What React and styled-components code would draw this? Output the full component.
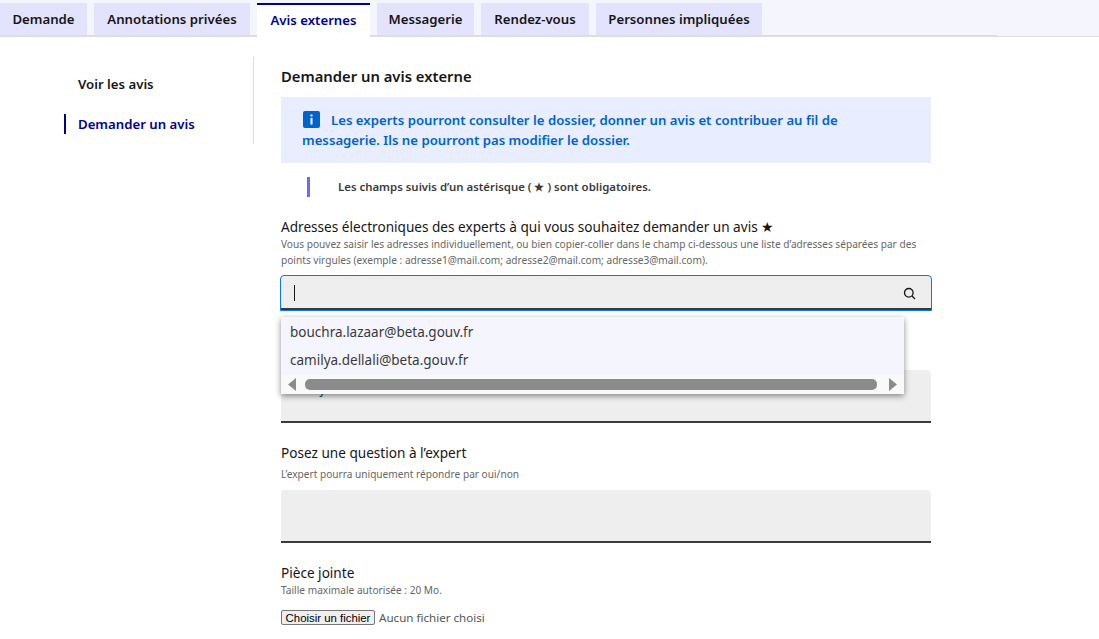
import React from 'react';
import styled, { createGlobalStyle } from 'styled-components';

const Global = createGlobalStyle`
  html, body { margin: 0; padding: 0; background: #fff; overflow: hidden; }
  body { font-family: "Noto Sans", "Liberation Sans", sans-serif; color: #161616; }
  * { box-sizing: border-box; }
`;

const TabBar = styled.div`
  height: 37px;
  padding-top: 3px;
  background: #f5f5fe;
  border-bottom: 1px solid #ddd;
`;

const TabList = styled.div`
  display: flex;
  gap: 7px;
  width: 998px;
  height: 33px;
  border-bottom: 1px solid #ddd;
`;

const Tab = styled.div`
  display: flex;
  align-items: center;
  justify-content: center;
  flex: none;
  width: ${(p) => p.$w}px;
  height: ${(p) => (p.$active ? 34 : 32)}px;
  background: ${(p) => (p.$active ? '#fff' : '#e3e3fd')};
  border-top: ${(p) => (p.$active ? '2px solid #000091' : 'none')};
  color: ${(p) => (p.$active ? '#000091' : '#161616')};
  font-size: 13.2px;
  font-weight: 600;
  padding-bottom: ${(p) => (p.$active ? 2 : 0)}px;
  z-index: 1;
`;

const Main = styled.div`
  display: flex;
  padding-top: 20px;
`;

const Side = styled.nav`
  width: 254px;
  height: 87px;
  padding-left: 64px;
  border-right: 1px solid #ddd;
  display: flex;
  flex-direction: column;
  gap: 20px;
  padding-top: 17px;
`;

const SideItem = styled.div`
  height: 20px;
  line-height: 20px;
  font-size: 13.2px;
  font-weight: 600;
  padding-left: ${(p) => (p.$active ? 12 : 14)}px;
  border-left: ${(p) => (p.$active ? '2px solid #000091' : 'none')};
  color: ${(p) => (p.$active ? '#000091' : '#161616')};
`;

const Content = styled.div`
  width: 650px;
  margin-left: 27px;
  position: relative;
`;

const Title = styled.h2`
  margin: 0;
  height: 40px;
  line-height: 39px;
  font-size: 14.8px;
  font-weight: 600;
`;

const Alert = styled.div`
  background: #e8edff;
  height: 66px;
  padding: 13px 21px;
  color: #0063cb;
  font-size: 13.2px;
  font-weight: 600;
  line-height: 20px;
`;

const InfoIcon = styled.svg`
  width: 17px;
  height: 17px;
  vertical-align: -3px;
  margin-right: 11px;
  margin-left: 1px;
`;

const Notice = styled.div`
  margin: 14px 0 0 26px;
  height: 20px;
  line-height: 20px;
  border-left: 3px solid #6a6af4;
  padding-left: 28px;
  font-size: 11.4px;
  font-weight: 600;
  color: #3a3a3a;
`;

const Label = styled.div`
  font-size: 13.6px;
  line-height: 18px;
  color: #161616;
  margin-top: ${(p) => p.$top}px;
`;

const Hint = styled.div`
  font-size: 10.15px;
  line-height: 16px;
  color: #666;
  margin-top: ${(p) => p.$top || 0}px;
`;

const SearchField = styled.div`
  display: flex;
  align-items: center;
  justify-content: space-between;
  height: 36px;
  margin: 7px -1px 0;
  padding: 0 15px 0 13px;
  background: #eee;
  border-radius: 4px 4px 0 0;
  border: 1px solid #0a76f6;
  box-shadow: inset 0 -2px 0 #3a3a3a;
`;

const Caret = styled.div`
  width: 1px;
  height: 16px;
  background: #161616;
`;

const Menu = styled.div`
  position: absolute;
  top: 260px;
  left: 0;
  width: 623px;
  height: 77px;
  padding-top: 1px;
  background: #f5f5fe;
  box-shadow: 0 2px 6px rgba(0, 0, 0, 0.45);
  z-index: 2;
`;

const MenuItem = styled.div`
  height: 28px;
  line-height: 28px;
  padding-left: 9px;
  font-size: 13.5px;
  color: #3a3a3a;
`;

const ScrollTrack = styled.div`
  position: absolute;
  left: 0;
  right: 0;
  bottom: 0;
  height: 19px;
  background: #f9f9f9;
  display: flex;
  align-items: center;
  padding: 0 7px;
  gap: 8px;
`;

const Thumb = styled.div`
  flex: 1;
  height: 11px;
  margin: 0 4px 0 1px;
  border-radius: 5px;
  background: #8b8b8b;
`;

const Arrow = styled.svg`
  width: 8px;
  height: 13px;
  flex: none;
`;

const TextBox = styled.div`
  height: 53px;
  margin-top: ${(p) => p.$top || 0}px;
  background: #eee;
  border-radius: 4px 4px 0 0;
  border-bottom: 2px solid #3a3a3a;
  padding: 9px 14px;
  font-size: 13.5px;
  color: #3a3a3a;
`;

const FileRow = styled.div`
  display: flex;
  align-items: center;
  gap: 4px;
  margin-top: 12px;
  font-size: 11.6px;
  color: #555;
`;

const FileButton = styled.button`
  width: 94px;
  height: 15px;
  padding: 0;
  font-family: "Liberation Sans", Arial, sans-serif;
  font-size: 11.4px;
  line-height: 12px;
  color: #000;
  background: #efefef;
  border: 1px solid #767676;
  border-radius: 2px;
`;

const tabs = [
  ['Demande', 87],
  ['Annotations privées', 156],
  ['Avis externes', 113],
  ['Messagerie', 97],
  ['Rendez-vous', 108],
  ['Personnes impliquées', 166],
];

const emails = ['bouchra.lazaar@beta.gouv.fr', 'camilya.dellali@beta.gouv.fr'];

const App = () => (
  <>
    <Global />
    <TabBar>
      <TabList>
        {tabs.map(([name, w]) => (
          <Tab key={name} $w={w} $active={name === 'Avis externes'}>{name}</Tab>
        ))}
      </TabList>
    </TabBar>
    <Main>
      <Side>
        <SideItem>Voir les avis</SideItem>
        <SideItem $active>Demander un avis</SideItem>
      </Side>
      <Content>
        <Title>Demander un avis externe</Title>
        <Alert>
          <InfoIcon viewBox="0 0 17 17">
            <rect width="17" height="17" rx="2" fill="#0063cb" />
            <rect x="7.5" y="3.5" width="2" height="2" fill="#fff" />
            <rect x="7.5" y="7" width="2" height="6.5" fill="#fff" />
          </InfoIcon>
          Les experts pourront consulter le dossier, donner un avis et contribuer au fil de messagerie. Ils ne pourront pas modifier le dossier.
        </Alert>
        <Notice>Les champs suivis d’un astérisque ( ★ ) sont obligatoires.</Notice>
        <Label $top={21}>Adresses électroniques des experts à qui vous souhaitez demander un avis ★</Label>
        <Hint>Vous pouvez saisir les adresses individuellement, ou bien copier-coller dans le champ ci-dessous une liste d’adresses séparées par des points virgules (exemple : adresse1@mail.com; adresse2@mail.com; adresse3@mail.com).</Hint>
        <SearchField>
          <Caret />
          <svg width="13" height="13" viewBox="0 0 13 13" fill="none" stroke="#161616" strokeWidth="1.3">
            <circle cx="5.8" cy="5.8" r="4.3" />
            <path d="M9 9l3 3" />
          </svg>
        </SearchField>
        <Menu>
          {emails.map((m) => <MenuItem key={m}>{m}</MenuItem>)}
          <ScrollTrack>
            <Arrow viewBox="0 0 8 13"><path d="M8 0v13L0 6.5z" fill="#8b8b8b" /></Arrow>
            <Thumb />
            <Arrow viewBox="0 0 8 13"><path d="M0 0v13l8-6.5z" fill="#8b8b8b" /></Arrow>
          </ScrollTrack>
        </Menu>
        <TextBox $top={59}>Bonjour</TextBox>
        <Label $top={21}>Posez une question à l’expert</Label>
        <Hint $top={4}>L’expert pourra uniquement répondre par oui/non</Hint>
        <TextBox $top={8} />
        <Label $top={21}>Pièce jointe</Label>
        <Hint>Taille maximale autorisée : 20 Mo.</Hint>
        <FileRow>
          <FileButton>Choisir un fichier</FileButton>
          Aucun fichier choisi
        </FileRow>
      </Content>
    </Main>
  </>
);

export default App;
